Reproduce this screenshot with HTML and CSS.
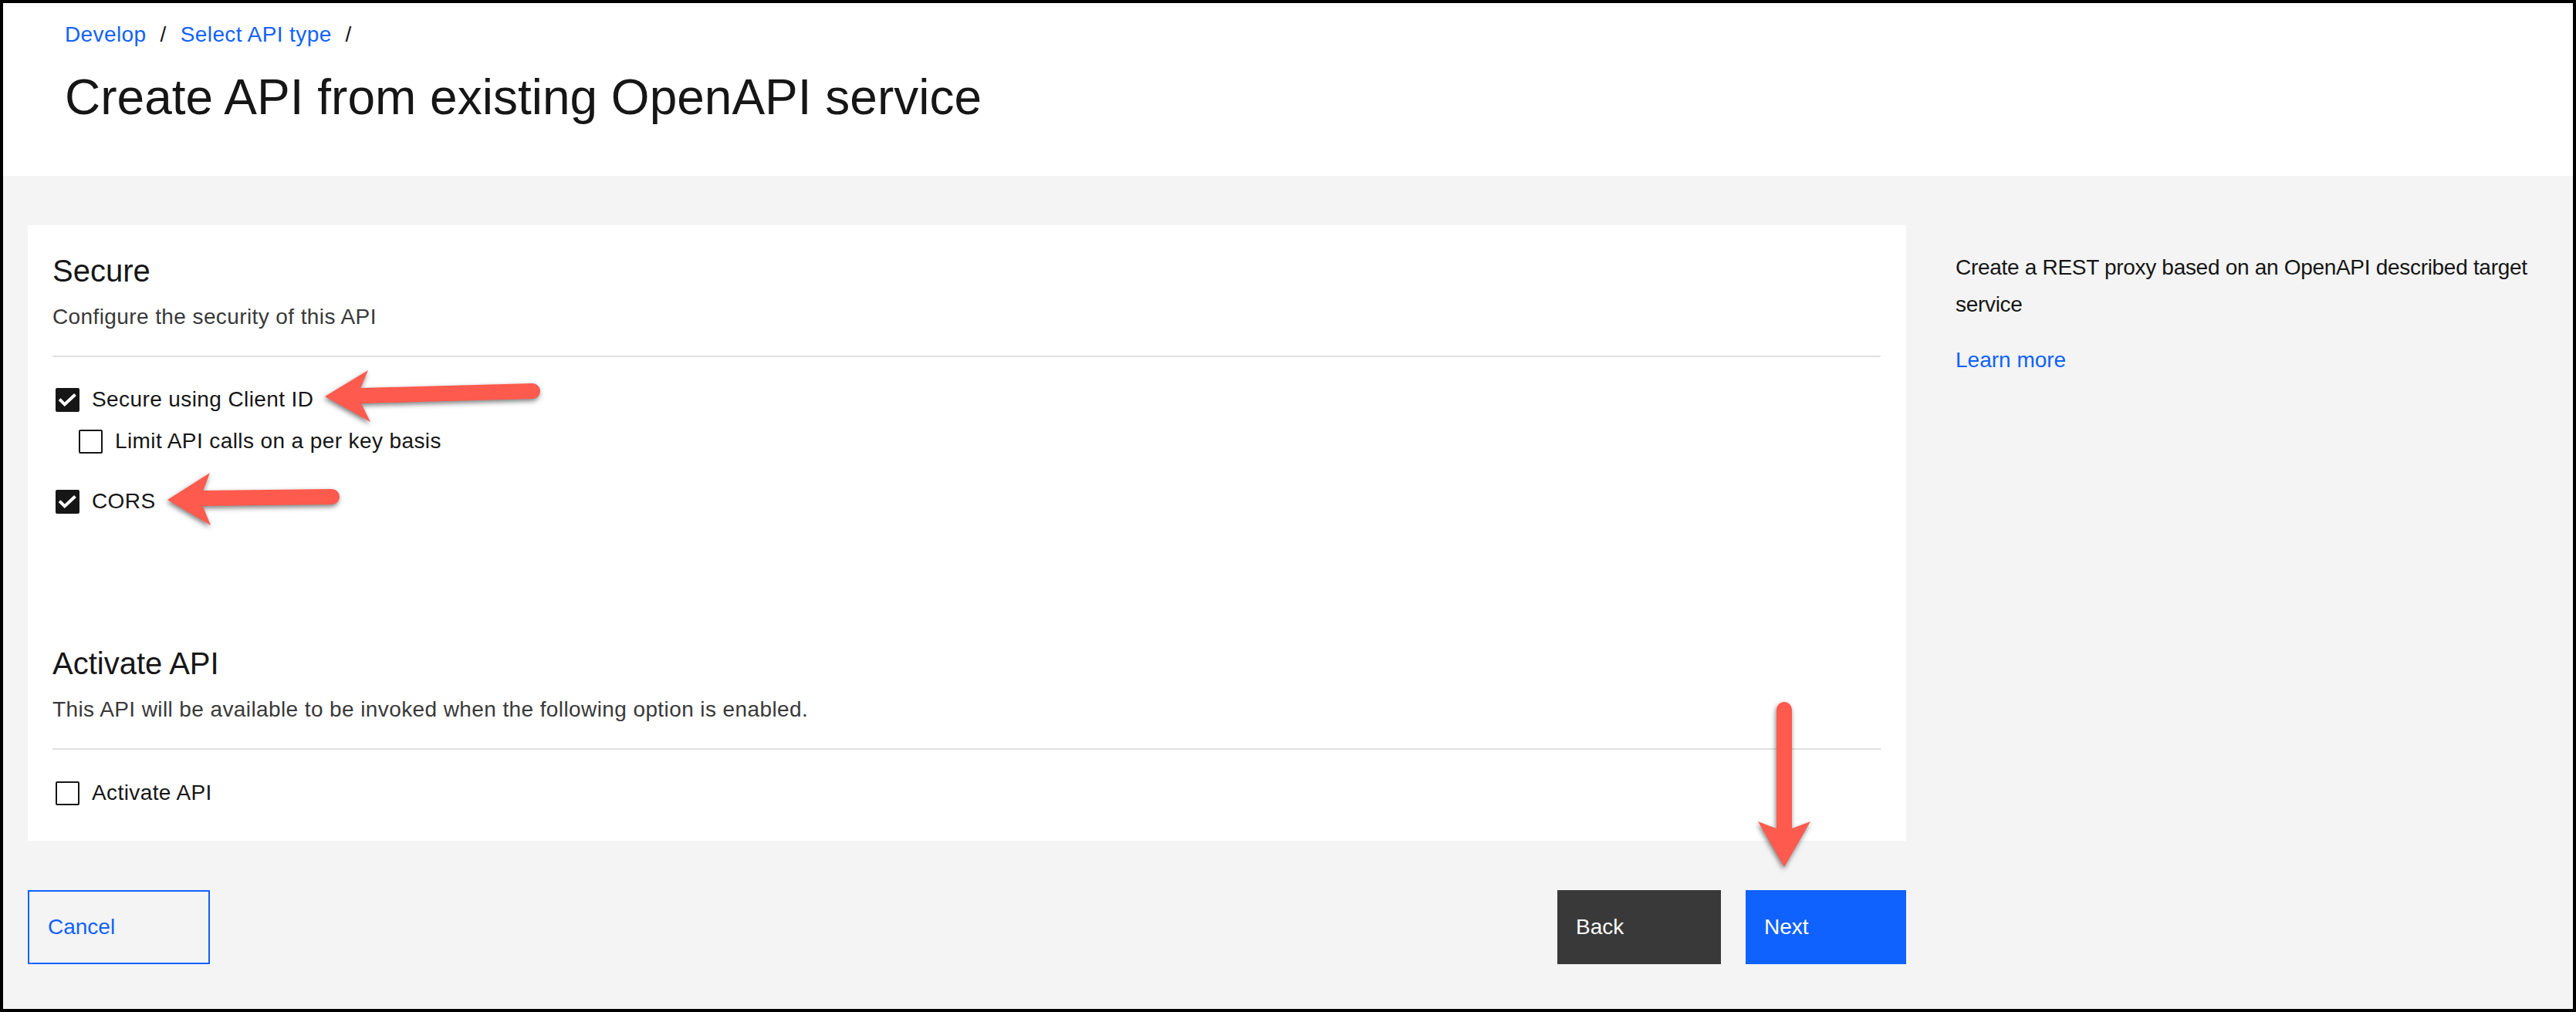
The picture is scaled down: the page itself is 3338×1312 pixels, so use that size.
FILE: index.html
```html
<!DOCTYPE html>
<html lang="en">
<head>
<meta charset="utf-8">
<title>Create API from existing OpenAPI service</title>
<link rel="stylesheet" href="styles.css">
</head>
<body>
<div class="frame">
  <header class="page-header">
    <nav class="breadcrumb">
      <a class="crumb" href="#">Develop</a><span class="sep">/</span><a class="crumb" href="#">Select API type</a><span class="sep">/</span>
    </nav>
    <h1 class="page-title">Create API from existing OpenAPI service</h1>
  </header>

  <main class="content">
    <div class="main-col">
      <div class="card">
        <section class="section">
          <h2 class="section-title">Secure</h2>
          <p class="section-desc">Configure the security of this API</p>
          <hr class="divider">
          <div class="check-row row-first">
            <span class="box checked"><svg viewBox="0 0 31 31" width="31" height="31"><path d="M6.5 16 L11.8 21.3 L24 9.8" fill="none" stroke="#fff" stroke-width="4" stroke-linecap="square" stroke-linejoin="miter"/></svg></span>
            <span class="label">Secure using Client ID</span>
          </div>
          <div class="check-row row-sub">
            <span class="box"></span>
            <span class="label">Limit API calls on a per key basis</span>
          </div>
          <div class="check-row row-cors">
            <span class="box checked"><svg viewBox="0 0 31 31" width="31" height="31"><path d="M6.5 16 L11.8 21.3 L24 9.8" fill="none" stroke="#fff" stroke-width="4" stroke-linecap="square" stroke-linejoin="miter"/></svg></span>
            <span class="label">CORS</span>
          </div>
        </section>

        <section class="section section-activate">
          <h2 class="section-title">Activate API</h2>
          <p class="section-desc">This API will be available to be invoked when the following option is enabled.</p>
          <hr class="divider">
          <div class="check-row row-activate">
            <span class="box"></span>
            <span class="label">Activate API</span>
          </div>
        </section>
      </div>

      <div class="actions">
        <button class="btn btn-ghost">Cancel</button>
        <div class="actions-right">
          <button class="btn btn-secondary">Back</button>
          <button class="btn btn-primary">Next</button>
        </div>
      </div>
    </div>

    <aside class="side">
      <p class="side-text">Create a REST proxy based on an OpenAPI described target service</p>
      <a class="side-link" href="#">Learn more</a>
    </aside>
  </main>

  <svg class="annotations" viewBox="0 0 3338 1312" width="3338" height="1312">
    <g class="arrow">
      <line x1="468" y1="513" x2="690" y2="507" stroke="#fe5a4d" stroke-width="20" stroke-linecap="round"/>
      <polygon points="421,514 477,480 463,513 480,547" fill="#fe5a4d"/>
    </g>
    <g class="arrow">
      <line x1="262" y1="646" x2="430" y2="644" stroke="#fe5a4d" stroke-width="20" stroke-linecap="round"/>
      <polygon points="217,648 272,613 259,647 273,681" fill="#fe5a4d"/>
    </g>
    <g class="arrow">
      <line x1="2312" y1="920" x2="2312" y2="1080" stroke="#fe5a4d" stroke-width="20" stroke-linecap="round"/>
      <polygon points="2312,1124 2278,1065 2312,1078 2346,1065" fill="#fe5a4d"/>
    </g>
  </svg>
</div>
</body>
</html>
```

FILE: styles.css
```css
* {
  box-sizing: border-box;
}

html, body {
  margin: 0;
  padding: 0;
}

body {
  font-family: "Liberation Sans", Arial, sans-serif;
  color: #161616;
  background: #000;
}

.frame {
  position: relative;
  width: 3338px;
  height: 1312px;
  border: 4px solid #000;
  background: #f4f4f4;
  overflow: hidden;
}

/* Header */
.page-header {
  background: #fff;
  padding: 21px 80px 62px 80px;
}

.breadcrumb {
  font-size: 28px;
  line-height: 40px;
  height: 40px;
  white-space: nowrap;
  letter-spacing: 0.4px;
}

.crumb {
  color: #0f62fe;
  text-decoration: none;
}

.sep {
  color: #161616;
  margin: 0 18px;
}

.page-title {
  margin: 21px 0 0 0;
  font-size: 64px;
  line-height: 80px;
  font-weight: 400;
  color: #161616;
}

/* Content */
.content {
  display: flex;
  padding: 64px 0 0 32px;
}

.main-col {
  width: 2434px;
  flex: none;
}

.card {
  background: #fff;
  padding: 35px 33px 42px 32px;
}

.section-title {
  margin: 0 0 16px 0;
  font-size: 40px;
  line-height: 48px;
  font-weight: 400;
  color: #161616;
}

.section-desc {
  margin: 0;
  font-size: 28px;
  line-height: 40px;
  letter-spacing: 0.4px;
  color: #393939;
}

.divider {
  margin: 30px 0 0 0;
  border: none;
  height: 2px;
  background: #e0e0e0;
}

.check-row {
  display: flex;
  align-items: center;
  height: 40px;
  padding-left: 4px;
}

.row-first {
  margin-top: 35px;
}

.row-sub {
  margin-top: 14px;
  padding-left: 34px;
}

.row-cors {
  margin-top: 38px;
}

.row-activate {
  margin-top: 36px;
}

.section-activate {
  margin-top: 166px;
}

.box {
  width: 31px;
  height: 31px;
  flex: none;
  border: 2px solid #161616;
  border-radius: 2px;
  background: #fff;
  position: relative;
}

.box.checked {
  background: #161616;
  border-color: #161616;
}

.box svg {
  position: absolute;
  left: -2px;
  top: -2px;
  display: block;
}

.label {
  margin-left: 16px;
  font-size: 28px;
  line-height: 40px;
  letter-spacing: 0.4px;
  color: #161616;
  white-space: nowrap;
}

/* Buttons */
.actions {
  margin-top: 64px;
  display: flex;
  justify-content: space-between;
}

.actions-right {
  display: flex;
  gap: 32px;
}

.btn {
  height: 96px;
  font-family: "Liberation Sans", Arial, sans-serif;
  font-size: 28px;
  text-align: left;
  padding: 0 24px;
  border: none;
  border-radius: 0;
  cursor: pointer;
  display: flex;
  align-items: center;
}

.btn-ghost {
  width: 236px;
  background: transparent;
  border: 2px solid #0f62fe;
  color: #0f62fe;
}

.btn-secondary {
  width: 212px;
  background: #393939;
  color: #fff;
}

.btn-primary {
  width: 208px;
  background: #0f62fe;
  color: #fff;
}

/* Side panel */
.side {
  flex: 1;
  padding: 31px 32px 0 64px;
}

.side-text {
  margin: 0;
  font-size: 28px;
  line-height: 48px;
  letter-spacing: -0.3px;
  color: #161616;
}

.side-link {
  display: block;
  margin-top: 24px;
  font-size: 28px;
  line-height: 48px;
  color: #0f62fe;
  text-decoration: none;
}

/* Annotation overlay */
.annotations {
  position: absolute;
  left: -4px;
  top: -4px;
  pointer-events: none;
}

.arrow {
  filter: drop-shadow(-1px 3px 3px rgba(0, 0, 0, 0.5));
}
```
